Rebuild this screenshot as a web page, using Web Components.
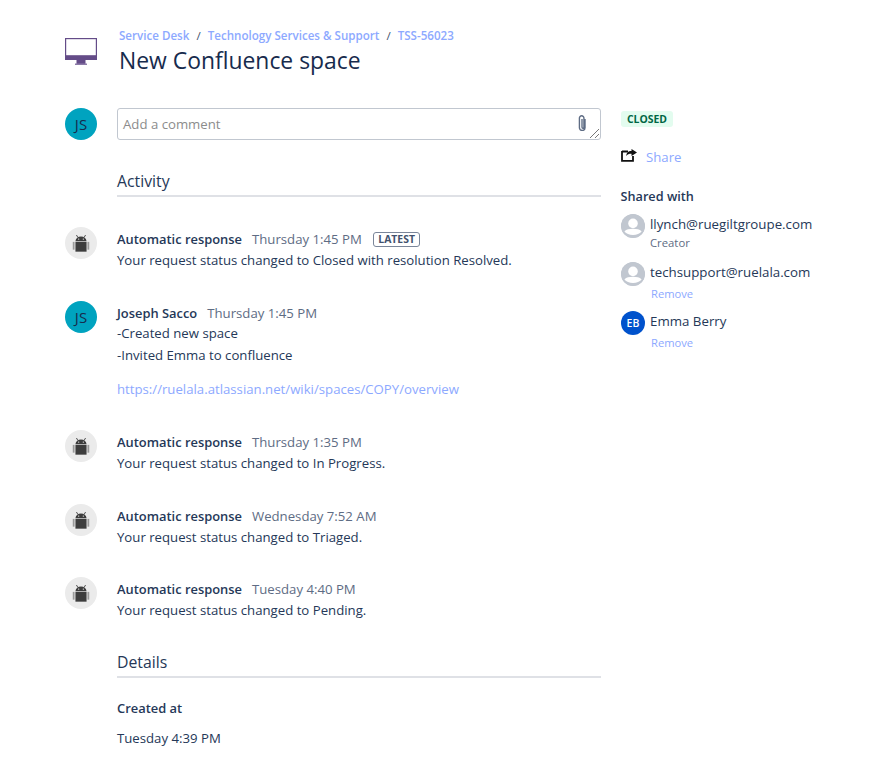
<!DOCTYPE html>
<html>
<head>
<meta charset="utf-8">
<title>TSS-56023</title>
<style>
html, body { margin: 0; background: #fff; }
body { font-family: "Open Sans", "Noto Sans", sans-serif; color: #253858; }
</style>
</head>
<body>
<template id="robot">
  <svg width="20" height="20" viewBox="0 0 18 18"><g fill="#3d3d3d"><path d="M4 7.4C4.2 4.7 6.3 3.2 9 3.2s4.8 1.5 5 4.2z"/><rect x="4" y="8" width="10" height="8.8"/></g><g fill="#9a9a9a"><rect x="1.6" y="8" width="1.6" height="7"/><rect x="14.8" y="8" width="1.6" height="7"/></g><path d="M6.2 4 4.9 1.8M11.8 4l1.3-2.2" stroke="#3d3d3d" stroke-width=".8"/><circle cx="6.9" cy="5.5" r=".6" fill="#ebebeb"/><circle cx="11.1" cy="5.5" r=".6" fill="#ebebeb"/></svg>
</template>

<script>
class UserAvatar extends HTMLElement {
    connectedCallback() {
        let kind = this.getAttribute("kind") || "initials";
        let initials = this.getAttribute("initials") || "";
        let size = this.getAttribute("size") || "32";
        let bg = this.getAttribute("bg") || "#00a3bf";
        let fg = this.getAttribute("fg") || "#172b4d";
        const shadow = this.attachShadow({mode: "open"});
        let inner = `<span class="txt">${initials}</span>`;
        if (kind === "bot") {
            bg = "#ebebeb";
            inner = document.getElementById("robot").innerHTML;
        }
        if (kind === "person") {
            bg = "#c1c7d0";
            inner = `<svg width="${size}" height="${size}" viewBox="0 0 24 24"><circle cx="12" cy="12" r="12" fill="#c1c7d0"/><circle cx="12" cy="9.4" r="4.8" fill="#fff"/><path d="M3.6 17.2c1.6-1.6 4.6-2.4 8.4-2.4s6.8.8 8.4 2.4v.6c-1.6 2-4.6 3.2-8.4 3.2s-6.8-1.2-8.4-3.2z" fill="#fff"/></svg>`;
        }
        shadow.innerHTML = `
        <style>
        :host {
            display: flex;
            flex: none;
            width: ${size}px;
            height: ${size}px;
            border-radius: 50%;
            background: ${bg};
            color: ${fg};
            align-items: center;
            justify-content: center;
            overflow: hidden;
        }
        .txt { font-size: ${size > 24 ? 15 : 10.5}px; font-weight: ${size > 24 ? 500 : 600}; }
        svg { display: block; }
        </style>
        ${inner}
        `;
    }
}
customElements.define("user-avatar", UserAvatar);

class PageHeader extends HTMLElement {
    connectedCallback() {
        this.attachShadow({mode: "open"}).innerHTML = `
        <style>
        :host { display: flex; gap: 22px; height: 59px; margin-bottom: 21px; }
        .icon { flex: none; width: 32px; padding-top: 10px; }
        svg { display: block; }
        .crumbs { font-size: 11.6px; font-weight: 600; color: #8da9ff; line-height: 16px; display: flex; gap: 7px; }
        .crumbs i { font-style: normal; font-weight: 400; color: #42526e; }
        h1 { margin: 1px 0 0; font-size: 22.9px; font-weight: 500; line-height: 32px; color: #172b4d; }
        </style>
        <div class="icon">
          <svg width="32" height="32" viewBox="0 0 32 32">
            <rect x="0" y="0" width="32" height="22" fill="#644c88"/>
            <rect x="1.2" y="1.2" width="29.6" height="16" fill="#fff"/>
            <rect x="11.5" y="22" width="9" height="4" fill="#644c88"/>
            <rect x="10" y="25.5" width="12" height="1.5" fill="#8b7aa8"/>
          </svg>
        </div>
        <div>
          <div class="crumbs"><span>Service Desk</span><i>/</i><span>Technology Services &amp; Support</span><i>/</i><span>TSS-56023</span></div>
          <h1>New Confluence space</h1>
        </div>
        `;
    }
}
customElements.define("page-header", PageHeader);

class CommentBox extends HTMLElement {
    connectedCallback() {
        this.attachShadow({mode: "open"}).innerHTML = `
        <style>
        :host { display: flex; gap: 20px; }
        .box { position: relative; flex: 1; height: 30px; border: 1px solid #c1c7d0; border-radius: 3px; padding: 0 5px; font-size: 13.2px; line-height: 31px; color: #8c8c8c; }
        .clip { position: absolute; right: 13px; top: 6px; display: block; }
        .grip { position: absolute; right: 1px; bottom: 1px; display: block; }
        </style>
        <user-avatar initials="JS"></user-avatar>
        <div class="box">Add a comment
          <svg class="clip" width="10" height="16" viewBox="1.3 1.2 8.6 14.9" fill="none" stroke="#5e6c84" stroke-width="1.3"><path d="M8.4 5v8a2.6 2.6 0 0 1-5.2 0V4a2 2 0 0 1 4.2 0v8.6a.9.9 0 0 1-1.8 0V5"/></svg>
          <svg class="grip" width="10" height="10" viewBox="0 0 10 10" stroke="#777" stroke-width="1"><path d="M1 10 10 1M6 10l4-4"/></svg>
        </div>
        `;
    }
}
customElements.define("comment-box", CommentBox);

class SectionTitle extends HTMLElement {
    connectedCallback() {
        this.attachShadow({mode: "open"}).innerHTML = `
        <style>
        :host { display: block; margin-left: 52px; font-size: 15.8px; line-height: 22px; font-weight: 500; color: #253858; padding-bottom: 3px; border-bottom: 2px solid #dfe1e6; }
        </style>
        <slot></slot>
        `;
    }
}
customElements.define("section-title", SectionTitle);

class ActivityItem extends HTMLElement {
    connectedCallback() {
        let author = this.getAttribute("author");
        let time = this.getAttribute("time");
        let kind = this.getAttribute("avatar");
        let latest = this.hasAttribute("latest") ? `<span class="lozenge">LATEST</span>` : "";
        let avatar = kind === "bot" ? `<user-avatar kind="bot"></user-avatar>` : `<user-avatar initials="JS"></user-avatar>`;
        this.attachShadow({mode: "open"}).innerHTML = `
        <style>
        :host { display: flex; gap: 20px; }
        .head { display: flex; align-items: center; height: 21px; margin-top: 1.5px; }
        b { font-size: 12.9px; font-weight: 600; color: #253858; }
        .time { margin-left: 10px; font-size: 13.2px; color: #5e6c84; }
        .lozenge { margin-left: 11px; border: 1px solid #7a869a; border-radius: 3px; padding: 0 4.5px; font-size: 10.4px; line-height: 13px; font-weight: 700; color: #42526e; }
        .body { padding-top: .5px; font-size: 13.2px; line-height: 21px; color: #253858; }
        </style>
        ${avatar}
        <div>
          <div class="head"><b>${author}</b><span class="time">${time}</span>${latest}</div>
          <div class="body"><slot></slot></div>
        </div>
        `;
    }
}
customElements.define("activity-item", ActivityItem);

class SharedUser extends HTMLElement {
    connectedCallback() {
        let name = this.getAttribute("name");
        let note = this.getAttribute("note");
        let remove = this.hasAttribute("remove");
        let initials = this.getAttribute("initials");
        let avatar = initials
            ? `<user-avatar size="24" initials="${initials}" bg="#0052cc" fg="#fff"></user-avatar>`
            : `<user-avatar size="24" kind="person"></user-avatar>`;
        this.attachShadow({mode: "open"}).innerHTML = `
        <style>
        :host { display: flex; gap: 5px; align-items: flex-start; }
        .name { font-size: 13.3px; line-height: 20px; color: #253858; }
        .note { font-size: 11.3px; line-height: 16px; margin-top: 1px; margin-bottom: 2px; color: #5e6c84; }
        .rm { font-size: 11.2px; line-height: 16px; margin-top: 4px; padding-left: 1px; color: #8da9ff; }
        </style>
        ${avatar}
        <div>
          <div class="name">${name}</div>
          ${note ? `<div class="note">${note}</div>` : ""}
          ${remove ? `<div class="rm">Remove</div>` : ""}
        </div>
        `;
    }
}
customElements.define("shared-user", SharedUser);

class SideBar extends HTMLElement {
    connectedCallback() {
        this.attachShadow({mode: "open"}).innerHTML = `
        <style>
        :host { display: block; width: 210px; }
        .status { display: inline-block; background: #e3fcef; color: #006644; font-size: 10.4px; font-weight: 700; line-height: 16px; padding: 0 6px; border-radius: 3px; margin-top: 3px; vertical-align: top; }
        .share { display: flex; align-items: center; gap: 9px; margin-top: 16px; font-size: 13.2px; color: #8da9ff; height: 22px; }
        .share svg { display: block; margin-top: -4px; }
        h3 { margin: 18px 0 0 -.5px; font-size: 12.7px; line-height: 20px; font-weight: 600; color: #253858; }
        .list { display: flex; flex-direction: column; gap: 9px; margin-top: 8px; }
        </style>
        <span class="status">CLOSED</span>
        <div class="share">
          <svg width="16" height="14" viewBox="0 0 16 14"><path d="M1 3.5h6M1 3v9.8h11V8" fill="none" stroke="#111" stroke-width="1.8"/><path d="M10.5 1v2C7 3 5.5 5 5.2 8c1-1.7 2.8-2.2 5.3-2.2V8L16 4.4z" fill="#111"/></svg>
          <span>Share</span>
        </div>
        <h3>Shared with</h3>
        <div class="list">
          <shared-user name="llynch@ruegiltgroupe.com" note="Creator"></shared-user>
          <shared-user name="techsupport@ruelala.com" remove></shared-user>
          <shared-user name="Emma Berry" initials="EB" remove></shared-user>
        </div>
        `;
    }
}
customElements.define("side-bar", SideBar);

class RequestPage extends HTMLElement {
    connectedCallback() {
        this.attachShadow({mode: "open"}).innerHTML = `
        <style>
        :host { display: block; padding: 28px 0 0 65px; width: 831px; box-sizing: border-box; }
        .cols { display: flex; gap: 20px; }
        .main { width: 536px; flex: none; }
        section-title.a { margin-top: 30px; }
        .feed { display: flex; flex-direction: column; gap: 29.6px; margin-top: 30px; }
        section-title.d { margin-top: 29.6px; }
        .sub { padding-left: 52px; }
        .k { font-size: 12.9px; font-weight: 600; line-height: 20px; margin-top: 20px; }
        .v { font-size: 13.2px; line-height: 20px; margin-top: 10px; }
        </style>
        <page-header></page-header>
        <div class="cols">
          <div class="main">
            <comment-box></comment-box>
            <section-title class="a">Activity</section-title>
            <div class="feed"><slot></slot></div>
            <section-title class="d">Details</section-title>
            <div class="sub">
              <div class="k">Created at</div>
              <div class="v">Tuesday 4:39 PM</div>
            </div>
          </div>
          <side-bar></side-bar>
        </div>
        `;
    }
}
customElements.define("request-page", RequestPage);
</script>

<request-page>
  <activity-item avatar="bot" author="Automatic response" time="Thursday 1:45 PM" latest>Your request status changed to Closed with resolution Resolved.</activity-item>
  <activity-item avatar="js" author="Joseph Sacco" time="Thursday 1:45 PM">
    <div style="line-height:22px;margin-top:-2px">-Created new space</div>
    <div style="line-height:22px">-Invited Emma to confluence</div>
    <div style="margin-top:13px;margin-bottom:1px;color:#8da9ff">https://ruelala.atlassian.net/wiki/spaces/COPY/overview</div>
  </activity-item>
  <activity-item avatar="bot" author="Automatic response" time="Thursday 1:35 PM">Your request status changed to In Progress.</activity-item>
  <activity-item avatar="bot" author="Automatic response" time="Wednesday 7:52 AM">Your request status changed to Triaged.</activity-item>
  <activity-item avatar="bot" author="Automatic response" time="Tuesday 4:40 PM">Your request status changed to Pending.</activity-item>
</request-page>
</body>
</html>
